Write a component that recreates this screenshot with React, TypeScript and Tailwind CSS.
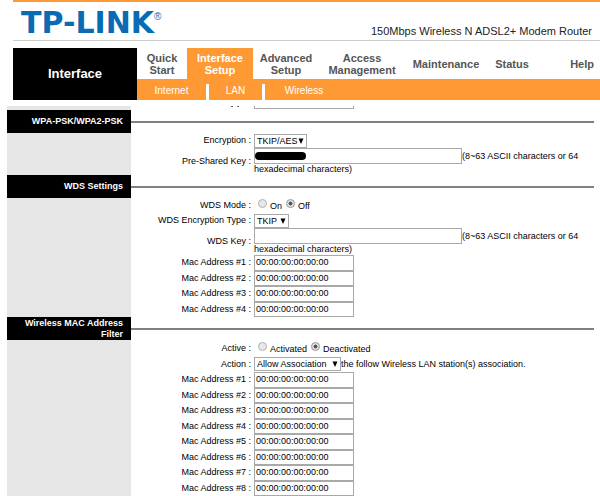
import React from 'react';

const tabs = [
    { lines: ['Quick', 'Start'], width: 'w-[50px]' },
    { lines: ['Interface', 'Setup'], width: 'w-[66px]', active: true },
    { lines: ['Advanced', 'Setup'], width: 'w-[66px]' },
    { lines: ['Access', 'Management'], width: 'w-[86px]' },
    { lines: ['Maintenance'], width: 'w-[82px]' },
    { lines: ['Status'], width: 'w-[50px]' },
];

const EMPTY_MAC = '00:00:00:00:00:00';

const Section: React.FC<{ title: string; children: React.ReactNode }> = ({ title, children }) => (
    <section>
        <div className="flex">
            <div className="flex w-[124px] h-[23px] shrink-0 items-center justify-end bg-black pr-2">
                <h2 className="text-right text-[9px] leading-[11px] font-bold text-white">{title}</h2>
            </div>
            <div className="flex flex-1 items-center">
                <div className="h-0.5 w-full bg-[#808080]"></div>
            </div>
        </div>
        <div className="flex">
            <div className="w-[124px] shrink-0 bg-[#e6e6e6]"></div>
            <div className="min-w-0 flex-1">{children}</div>
        </div>
    </section>
);

const Row: React.FC<{ label: string; htmlFor?: string; height?: string; children: React.ReactNode }> = ({ label, htmlFor, height = '', children }) => (
    <div className={`flex items-center ${height}`}>
        <label htmlFor={htmlFor} className="w-[120px] shrink-0 text-right whitespace-nowrap">{label} :</label>
        <div className="min-w-0 flex-1 pl-[3px]">{children}</div>
    </div>
);

const Select: React.FC<{ id: string; width: string; options: string[] }> = ({ id, width, options }) => (
    <span className={`relative block h-[14px] shrink-0 ${width}`}>
        <select id={id} className="block h-full w-full appearance-none border border-[#a9a9a9] bg-white pl-0.5 text-[9px] leading-[12px]">
            {options.map((option) => (
                <option key={option}>{option}</option>
            ))}
        </select>
        <svg viewBox="0 0 6 6" className="pointer-events-none absolute top-1 right-[3px] h-1.5 w-1.5">
            <path d="M0.5 0.5h5L3 6z" fill="#000" />
        </svg>
    </span>
);

const Radio: React.FC<{ name: string; label: string; checked?: boolean }> = ({ name, label, checked }) => (
    <label className="flex items-start gap-[3px]">
        <input
            type="radio"
            name={name}
            defaultChecked={checked}
            className="m-0 h-[9px] w-[9px] appearance-none rounded-full border border-[#b0b0b0] bg-[#e8e8e8] checked:border-[#999] checked:bg-radial checked:from-[#555] checked:from-35% checked:to-[#e0e0e0] checked:to-45%"
        />
        <span className="pt-0.5">{label}</span>
    </label>
);

const KeyRow: React.FC<{ id: string; label: string; masked?: boolean }> = ({ id, label, masked }) => (
    <Row label={label} htmlFor={id}>
        <div className="flex items-center">
            <span className="relative block w-[208px] shrink-0">
                <input id={id} type="text" className="block h-4 w-full border border-[#a9a9a9] bg-white px-0.5" />
                {masked && <span className="absolute top-1 left-px h-2 w-[51px] rounded-full bg-black"></span>}
            </span>
            <span className="whitespace-nowrap">(8~63 ASCII characters or 64</span>
        </div>
        <div>hexadecimal characters)</div>
    </Row>
);

const MacList: React.FC<{ prefix: string; count: number; height: string }> = ({ prefix, count, height }) => (
    <div className={`grid auto-rows-fr ${height}`}>
        {Array.from({ length: count }, (_, i) => (
            <div key={i} className="flex items-stretch">
                <label htmlFor={`${prefix}-${i}`} className="flex w-[120px] shrink-0 items-center justify-end whitespace-nowrap">
                    Mac Address #{i + 1} :
                </label>
                <div className="flex pl-[3px]">
                    <input
                        id={`${prefix}-${i}`}
                        type="text"
                        defaultValue={EMPTY_MAC}
                        className="w-[100px] border border-[#a9a9a9] bg-white px-px"
                    />
                </div>
            </div>
        ))}
    </div>
);

const App: React.FC = () => (
    <div className="min-h-screen bg-white text-black [font-family:'Liberation_Sans',Arial,sans-serif]">
        {/* Brand bar */}
        <header className="pl-[13px]">
            <div className="flex h-[41px] items-end justify-between border-t-2 border-b border-t-[#ff9933] border-b-[#ccc] pr-2 pl-2">
                <div className="flex items-start pb-0.5 text-[#0a6ab4]">
                    <span className="text-[30px] leading-[30px] font-bold [font-family:'DejaVu_Sans',sans-serif]">TP-LINK</span>
                    <span className="pt-0.5 text-[10px] leading-[14px]">®</span>
                </div>
                <span className="pb-0.5 text-[11px] leading-[14px] text-[#222]">150Mbps Wireless N ADSL2+ Modem Router</span>
            </div>

            <div className="mt-[7px] flex">
                <div className="flex w-[124px] shrink-0 items-center justify-center bg-black">
                    <h1 className="text-[13px] font-bold text-white">Interface</h1>
                </div>
                <div className="min-w-0 flex-1">
                    <nav className="flex h-[31px] text-[11px] leading-[12px] font-bold text-[#555]">
                        {tabs.map((tab) => (
                            <a
                                key={tab.lines.join(' ')}
                                href="#"
                                className={`flex shrink-0 flex-col items-center justify-center ${tab.width} ${tab.active ? 'bg-[#ff9933] text-white' : ''}`}
                            >
                                {tab.lines.map((line) => (
                                    <span key={line}>{line}</span>
                                ))}
                            </a>
                        ))}
                        <a href="#" className="flex flex-1 items-center justify-end pr-[6px]">Help</a>
                    </nav>
                    <nav className="flex h-[21px] items-center bg-[#ff9933] text-[10px] text-white">
                        <a href="#" className="w-[69px] pt-0.5 text-center">Internet</a>
                        <span className="mt-1 h-4 w-[3px] bg-white"></span>
                        <a href="#" className="w-[53px] pt-0.5 text-center">LAN</a>
                        <span className="mt-1 h-4 w-[3px] bg-white"></span>
                        <a href="#" className="w-[78px] pt-0.5 text-center">Wireless</a>
                    </nav>
                </div>
            </div>
        </header>

        {/* Settings */}
        <main className="mt-[6px] pr-[6px] pl-[7px] text-[9px] leading-[11px]">
            {/* row scrolled under the menu */}
            <div className="flex h-1 items-end overflow-hidden">
                <div className="h-full w-[124px] shrink-0 bg-[#e6e6e6]"></div>
                <div className="flex w-[120px] items-center justify-end gap-1 self-start pr-3">
                    <span className="h-px w-0.5 bg-[#666]"></span>
                    <span className="h-px w-0.5 bg-[#666]"></span>
                </div>
                <div className="pb-px pl-[3px]">
                    <input type="text" aria-label="Key interval" className="block h-4 w-[100px] border border-[#a9a9a9]" />
                </div>
            </div>

            <Section title="WPA-PSK/WPA2-PSK">
                <Row label="Encryption" htmlFor="encryption" height="h-[15px]">
                    <Select id="encryption" width="w-[53px]" options={['TKIP/AES', 'TKIP', 'AES']} />
                </Row>
                <KeyRow id="psk" label="Pre-Shared Key" masked />
            </Section>

            <Section title="WDS Settings">
                <Row label="WDS Mode" height="h-[15px]">
                    <div className="flex gap-1 pl-1">
                        <Radio name="wds-mode" label="On" />
                        <Radio name="wds-mode" label="Off" checked />
                    </div>
                </Row>
                <Row label="WDS Encryption Type" htmlFor="wds-encryption" height="h-[15px]">
                    <Select id="wds-encryption" width="w-[35px]" options={['TKIP', 'AES']} />
                </Row>
                <KeyRow id="wds-key" label="WDS Key" />
                <MacList prefix="wds-mac" count={4} height="h-[62px]" />
            </Section>

            <Section title="Wireless MAC Address Filter">
                <Row label="Active" height="h-4">
                    <div className="flex gap-1 pl-1">
                        <Radio name="filter-active" label="Activated" />
                        <Radio name="filter-active" label="Deactivated" checked />
                    </div>
                </Row>
                <Row label="Action" htmlFor="filter-action" height="h-4">
                    <div className="flex items-center">
                        <Select id="filter-action" width="w-[87px]" options={['Allow Association', 'Deny Association']} />
                        <span className="whitespace-nowrap">the follow Wireless LAN station(s) association.</span>
                    </div>
                </Row>
                <MacList prefix="filter-mac" count={8} height="h-[124px]" />
            </Section>
        </main>
    </div>
);

export default App;
